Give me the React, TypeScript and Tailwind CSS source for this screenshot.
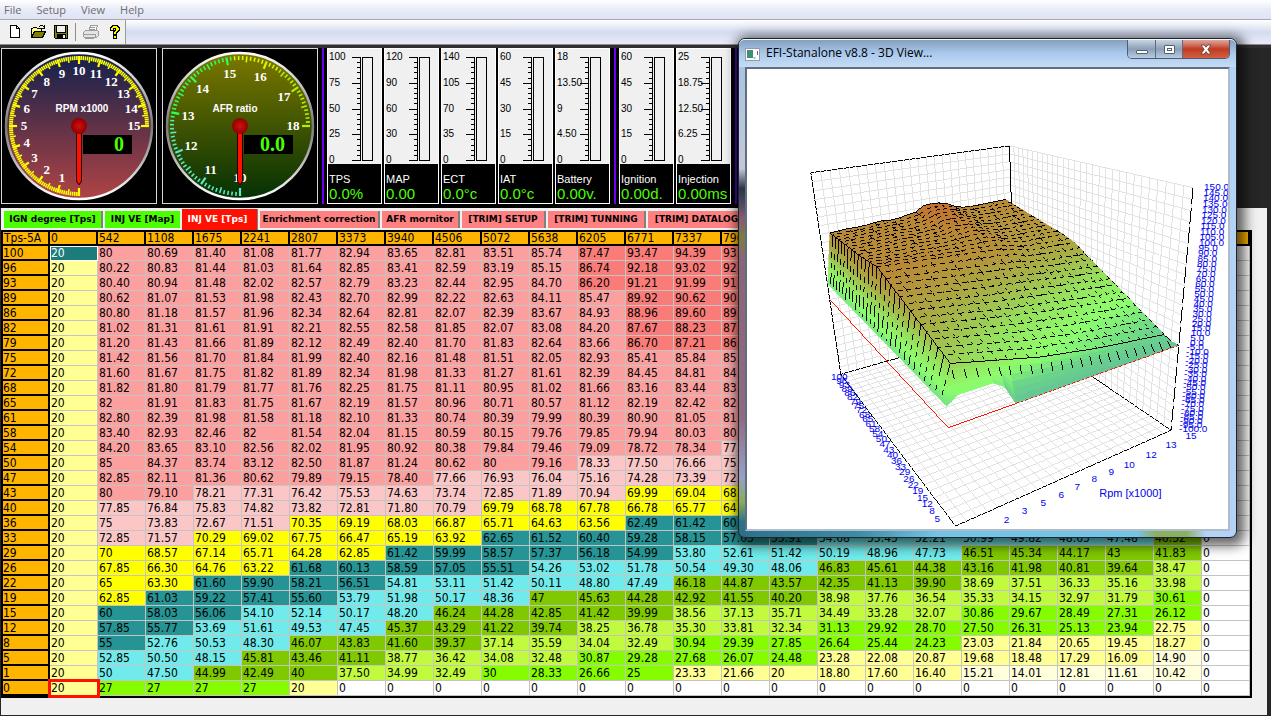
import * as React from "react";

/* ---------- fuel map data ---------- */

const RPM = [
  0, 542, 1108, 1675, 2241, 2807, 3373, 3940, 4506, 5072, 5638, 6205, 6771, 7337, 7904, 8470, 9036, 9603, 10169, 10735,
  11301, 11868, 12434, 13000, 13600,
];

// First column is the throttle position, then one value per RPM column.
const RAW = `
100|20 80 80.69 81.40 81.08 81.77 82.94 83.65 82.81 83.51 85.74 87.47 93.47 94.39 93.80
96|20 80.22 80.83 81.44 81.03 81.64 82.85 83.41 82.59 83.19 85.15 86.74 92.18 93.02 92.40
93|20 80.40 80.94 81.48 82.02 82.57 82.79 83.23 82.44 82.95 84.70 86.20 91.21 91.99 91.30
89|20 80.62 81.07 81.53 81.98 82.43 82.70 82.99 82.22 82.63 84.11 85.47 89.92 90.62 90.10
86|20 80.80 81.18 81.57 81.96 82.34 82.64 82.81 82.07 82.39 83.67 84.93 88.96 89.60 89.10
82|20 81.02 81.31 81.61 81.91 82.21 82.55 82.58 81.85 82.07 83.08 84.20 87.67 88.23 87.60
79|20 81.20 81.43 81.66 81.89 82.12 82.49 82.40 81.70 81.83 82.64 83.66 86.70 87.21 86.50
75|20 81.42 81.56 81.70 81.84 81.99 82.40 82.16 81.48 81.51 82.05 82.93 85.41 85.84 85.20
72|20 81.60 81.67 81.75 81.82 81.89 82.34 81.98 81.33 81.27 81.61 82.39 84.45 84.81 84.20
68|20 81.82 81.80 81.79 81.77 81.76 82.25 81.75 81.11 80.95 81.02 81.66 83.16 83.44 83.00
65|20 82 81.91 81.83 81.75 81.67 82.19 81.57 80.96 80.71 80.57 81.12 82.19 82.42 82.00
61|20 82.80 82.39 81.98 81.58 81.18 82.10 81.33 80.74 80.39 79.99 80.39 80.90 81.05 81.00
58|20 83.40 82.93 82.46 82 81.54 82.04 81.15 80.59 80.15 79.76 79.85 79.94 80.03 80.00
54|20 84.20 83.65 83.10 82.56 82.02 81.95 80.92 80.38 79.84 79.46 79.09 78.72 78.34 77.50
50|20 85 84.37 83.74 83.12 82.50 81.87 81.24 80.62 80 79.16 78.33 77.50 76.66 75.80
47|20 82.85 82.11 81.36 80.62 79.89 79.15 78.40 77.66 76.93 76.04 75.16 74.28 73.39 72.50
43|20 80 79.10 78.21 77.31 76.42 75.53 74.63 73.74 72.85 71.89 70.94 69.99 69.04 68.10
40|20 77.85 76.84 75.83 74.82 73.82 72.81 71.80 70.79 69.79 68.78 67.78 66.78 65.77 64.70
36|20 75 73.83 72.67 71.51 70.35 69.19 68.03 66.87 65.71 64.63 63.56 62.49 61.42 60.30
33|20 72.85 71.57 70.29 69.02 67.75 66.47 65.19 63.92 62.65 61.52 60.40 59.28 58.15 57.03 55.91 54.68 53.45 52.21 50.99 49.82 48.65 47.48 46.32 0
29|20 70 68.57 67.14 65.71 64.28 62.85 61.42 59.99 58.57 57.37 56.18 54.99 53.80 52.61 51.42 50.19 48.96 47.73 46.51 45.34 44.17 43 41.83 0
26|20 67.85 66.30 64.76 63.22 61.68 60.13 58.59 57.05 55.51 54.26 53.02 51.78 50.54 49.30 48.06 46.83 45.61 44.38 43.16 41.98 40.81 39.64 38.47 0
22|20 65 63.30 61.60 59.90 58.21 56.51 54.81 53.11 51.42 50.11 48.80 47.49 46.18 44.87 43.57 42.35 41.13 39.90 38.69 37.51 36.33 35.16 33.98 0
19|20 62.85 61.03 59.22 57.41 55.60 53.79 51.98 50.17 48.36 47 45.63 44.28 42.92 41.55 40.20 38.98 37.76 36.54 35.33 34.15 32.97 31.79 30.61 0
15|20 60 58.03 56.06 54.10 52.14 50.17 48.20 46.24 44.28 42.85 41.42 39.99 38.56 37.13 35.71 34.49 33.28 32.07 30.86 29.67 28.49 27.31 26.12 0
12|20 57.85 55.77 53.69 51.61 49.53 47.45 45.37 43.29 41.22 39.74 38.25 36.78 35.30 33.81 32.34 31.13 29.92 28.70 27.50 26.31 25.13 23.94 22.75 0
8|20 55 52.76 50.53 48.30 46.07 43.83 41.60 39.37 37.14 35.59 34.04 32.49 30.94 29.39 27.85 26.64 25.44 24.23 23.03 21.84 20.65 19.45 18.27 0
5|20 52.85 50.50 48.15 45.81 43.46 41.11 38.77 36.42 34.08 32.48 30.87 29.28 27.68 26.07 24.48 23.28 22.08 20.87 19.68 18.48 17.29 16.09 14.90 0
1|20 50 47.50 44.99 42.49 40 37.50 34.99 32.49 30 28.33 26.66 25 23.33 21.66 20 18.80 17.60 16.40 15.21 14.01 12.81 11.61 10.42 0
0|20 27 27 27 27 20 0 0 0 0 0 0 0 0 0 0 0 0 0 0 0 0 0 0 0`;

// High-load rows are completed by blending between the wide open tail and the 33% tail.
const TOP_TAIL = [93.8, 91, 86.4, 83.4, 82.6, 82.8, 83, 83.3, 83.5, 83.8];
const LOW_TAIL = [57.03, 55.91, 54.68, 53.45, 52.21, 50.99, 49.82, 48.65, 47.48, 46.32];

const MAP = RAW.trim()
  .split("\n")
  .map((line) => {
    const [tps, rest] = line.split("|");
    const values = rest.split(" ");
    if (values.length === 15) {
      const w = (Number(values[14]) - LOW_TAIL[0]) / (TOP_TAIL[0] - LOW_TAIL[0]);
      for (let i = 1; i < 10; i++) values.push((LOW_TAIL[i] + w * (TOP_TAIL[i] - LOW_TAIL[i])).toFixed(2));
      values.push("0");
    }
    return { tps, values };
  });

function cellColor(v: number) {
  if (v >= 86.1) return "bg-[#fa7c78]";
  if (v >= 78.335) return "bg-[#fc9f9f]";
  if (v >= 70.5) return "bg-[#fbc6c6]";
  if (v >= 62.7) return "bg-[#ffff00]";
  if (v >= 54.85) return "bg-[#269494]";
  if (v >= 47.2) return "bg-[#70eaea]";
  if (v >= 39.2) return "bg-[#80c800]";
  if (v >= 31.3) return "bg-[#c2fb3e]";
  if (v >= 23.5) return "bg-[#86fc00]";
  if (v >= 15.6) return "bg-[#ffff94]";
  if (v > 0) return "bg-[#ffffdc]";
  return "bg-white";
}

/* ---------- round gauges ---------- */

type DialProps = {
  id: string;
  title: string;
  titleX: number;
  labelRadius: number;
  min: number;
  max: number;
  value: string;
  from: string;
  to: string;
  tick: (t: number) => string;
};

function polar(r: number, t: number) {
  const a = ((90 + 270 * t) * Math.PI) / 180;
  return [77 + r * Math.cos(a), 77 + r * Math.sin(a)];
}

function Dial({ id, title, titleX, labelRadius, min, max, value, from, to, tick }: DialProps) {
  const n = (max - min) * 10;
  const marks = Array.from({ length: n + 1 }, (_, i) => i);
  const labels = Array.from({ length: max - min + 1 }, (_, i) => min + i);
  return (
    <div className="size-[156px] shrink-0 border border-[#d8d8d8] bg-black">
      <svg viewBox="0 0 154 154" className="block size-full" role="img" aria-label={title}>
        <defs>
          <linearGradient id={`${id}-face`} x1="0" y1="0" x2="0" y2="1">
            <stop offset="0" stopColor={from} />
            <stop offset="1" stopColor={to} />
          </linearGradient>
          <linearGradient id={`${id}-rim`} x1="0" y1="0" x2="0" y2="1">
            <stop offset="0" stopColor="#ffffff" />
            <stop offset="0.5" stopColor="#777777" />
            <stop offset="1" stopColor="#ffffff" />
          </linearGradient>
          <radialGradient id={`${id}-hub`}>
            <stop offset="0" stopColor="#d01010" />
            <stop offset="1" stopColor="#900000" />
          </radialGradient>
        </defs>
        <circle cx="77" cy="77" r="73" fill={`url(#${id}-face)`} stroke={`url(#${id}-rim)`} strokeWidth="2.5" />
        {marks.map((i) => {
          const t = i / n;
          const major = i % 10 === 0;
          const [x1, y1] = polar(major ? 62 : i % 5 === 0 ? 64 : 66, t);
          const [x2, y2] = polar(70, t);
          return <line key={i} x1={x1} y1={y1} x2={x2} y2={y2} stroke={tick(t)} strokeWidth={major ? 2.2 : 1.6} />;
        })}
        {labels.map((v, i) => {
          const [x, y] = polar(i === 0 ? 52 : labelRadius, i / (labels.length - 1));
          return (
            <text
              key={v}
              x={x}
              y={y + 4}
              textAnchor="middle"
              fill="#fff"
              fontSize="13"
              fontWeight="bold"
              fontFamily="'Liberation Serif', serif"
            >
              {v}
            </text>
          );
        })}
        <text
          x={titleX}
          y="63"
          textAnchor="middle"
          fill="#fff"
          fontSize="10"
          fontWeight="bold"
          fontFamily="'Liberation Sans', sans-serif"
        >
          {title}
        </text>
        <rect x="81" y="86" width="49" height="19" fill="#000" />
        <text
          x="122"
          y="102"
          textAnchor="end"
          fill="#4cff00"
          fontSize="20"
          fontWeight="bold"
          fontFamily="'Liberation Serif', serif"
        >
          {value}
        </text>
        <path d="M74.5 77v55l2.5 4 2.5-4V77z" fill="#ff1000" stroke="#200" strokeWidth="1" />
        <circle cx="77" cy="77" r="8" fill={`url(#${id}-hub)`} />
      </svg>
    </div>
  );
}

/* ---------- bar gauges ---------- */

function BarGauge({ name, value, scale }: { name: string; value: string; scale: string[] }) {
  return (
    <div className="flex h-[156px] w-[57px] shrink-0 flex-col border-r-2 border-black">
      <div className="flex h-full flex-col border border-white bg-[#f0f0f0]">
        <svg viewBox="0 0 53 115" className="block h-[115px] w-[53px] overflow-visible" shapeRendering="crispEdges">
          {Array.from({ length: 21 }, (_, i) => (
            <rect key={i} x={i % 5 ? 29 : 24} y={8 + Math.round(i * 5.15)} width={i % 5 ? 4 : 9} height="1" fill="#000" />
          ))}
          <rect x="32" y="8" width="1" height="104" fill="#000" />
          <rect x="34.5" y="8.5" width="10" height="103" fill="none" stroke="#000" />
          {scale.map((s, i) => (
            <text
              key={i}
              x="1"
              y={11 + Math.round(i * 25.75)}
              fontSize="10"
              fill="#000"
              fontFamily="'Liberation Sans', sans-serif"
            >
              {s}
            </text>
          ))}
        </svg>
        <div className="flex-1 bg-black pt-2 pl-px font-['Liberation_Sans',sans-serif] whitespace-nowrap">
          <div className="text-[11px] leading-[14px] text-white">{name}</div>
          <output className="block text-[15px] leading-4 text-[#4cff00]">{value}</output>
        </div>
      </div>
    </div>
  );
}

const ENGINE_BARS = [
  { name: "TPS", value: "0.0%", scale: ["100", "75", "50", "25", "0"] },
  { name: "MAP", value: "0.00", scale: ["120", "90", "60", "30", "0"] },
  { name: "ECT", value: "0.0°c", scale: ["140", "105", "70", "35", "0"] },
  { name: "IAT", value: "0.0°c", scale: ["60", "45", "30", "15", "0"] },
  { name: "Battery", value: "0.00v.", scale: ["18", "13.50", "9", "4.50", "0"] },
];

const OUTPUT_BARS = [
  { name: "Ignition", value: "0.00d.", scale: ["60", "45", "30", "15", "0"] },
  { name: "Injection", value: "0.00ms", scale: ["25", "18.75", "12.50", "6.25", "0"] },
];

/* ---------- 3D surface ---------- */

type Pt = [number, number];

// Perspective camera: x = rpm, y = throttle (0 is 100%), z = value from -100 to 150.
function project(x: number, y: number, z: number): Pt {
  const w = 1 + 0.1577 * x - 0.3056 * y - 0.125 * z;
  return [(840.4 + 334.7 * x - 177.2 * y - 131.3 * z) / w, (375 + 1.3 * x - 9.3 * y - 223.9 * z) / w];
}

// Perspective mapping of the unit square on four corners.
function quadMap([p0, p1, p2, p3]: Pt[]) {
  const dx1 = p1[0] - p2[0];
  const dx2 = p3[0] - p2[0];
  const dx3 = p0[0] - p1[0] + p2[0] - p3[0];
  const dy1 = p1[1] - p2[1];
  const dy2 = p3[1] - p2[1];
  const dy3 = p0[1] - p1[1] + p2[1] - p3[1];
  const det = dx1 * dy2 - dx2 * dy1;
  const g = (dx3 * dy2 - dx2 * dy3) / det;
  const h = (dx1 * dy3 - dx3 * dy1) / det;
  return (u: number, v: number): Pt => {
    const w = g * u + h * v + 1;
    return [
      ((p1[0] - p0[0] + g * p1[0]) * u + (p3[0] - p0[0] + h * p3[0]) * v + p0[0]) / w,
      ((p1[1] - p0[1] + g * p1[1]) * u + (p3[1] - p0[1] + h * p3[1]) * v + p0[1]) / w,
    ];
  };
}

const A: Pt = [810, 173];
const B: Pt = [1009, 146];
const C: Pt = [1193, 188];
const D: Pt = [840, 375];
const E: Pt = [955, 527];
const F: Pt = [1171, 431];
const G: Pt = [1015, 325];

const fmt = (p: Pt) => `${p[0].toFixed(1)} ${p[1].toFixed(1)}`;

function gridPath(corners: Pt[], nu: number, nv: number) {
  const m = quadMap(corners);
  let d = "";
  for (let i = 0; i <= nu; i++) d += `M${fmt(m(i / nu, 0))}L${fmt(m(i / nu, 1))}`;
  for (let j = 0; j <= nv; j++) d += `M${fmt(m(0, j / nv))}L${fmt(m(1, j / nv))}`;
  return d;
}

const RAMP: [number, number, number, number][] = [
  [0, 100, 196, 150],
  [15, 108, 214, 136],
  [30, 140, 255, 108],
  [45, 150, 224, 92],
  [60, 166, 178, 70],
  [72, 178, 152, 60],
  [83, 184, 136, 52],
  [95, 200, 108, 44],
];

function heat(v: number) {
  for (let i = 1; i < RAMP.length; i++) {
    if (v <= RAMP[i][0]) {
      const [v0, ...a] = RAMP[i - 1];
      const [v1, ...b] = RAMP[i];
      const t = Math.max(0, (v - v0) / (v1 - v0));
      return `rgb(${a.map((c, k) => Math.round(c + t * (b[k] - c))).join(",")})`;
    }
  }
  return "rgb(200,108,44)";
}

const NUM = MAP.map((r) => r.values.map(Number));

function at(c: number, r: number) {
  const c0 = Math.min(23, Math.floor(c));
  const r0 = Math.min(28, Math.floor(r));
  const s = c - c0;
  const t = r - r0;
  return (
    (NUM[r0][c0] * (1 - s) + NUM[r0][c0 + 1] * s) * (1 - t) + (NUM[r0 + 1][c0] * (1 - s) + NUM[r0 + 1][c0 + 1] * s) * t
  );
}

const vertex = (c: number, r: number): Pt => project(c / 24, r / 29, (at(c, r) + 100) / 250);

function Surface() {
  const parts: React.ReactNode[] = [];
  for (let r = 0; r < 29; r++) {
    for (let c = 23; c >= 0; c--) {
      const nc = c === 0 ? 10 : c === 23 ? 4 : 1;
      const nr = r === 28 ? 6 : 1;
      for (let j = 0; j < nr; j++) {
        for (let i = nc - 1; i >= 0; i--) {
          const c0 = c + i / nc;
          const c1 = c + (i + 1) / nc;
          const r0 = r + j / nr;
          const r1 = r + (j + 1) / nr;
          const fill = heat(at((c0 + c1) / 2, (r0 + r1) / 2));
          const d = `M${fmt(vertex(c0, r0))}L${fmt(vertex(c1, r0))}L${fmt(vertex(c1, r1))}L${fmt(vertex(c0, r1))}Z`;
          parts.push(<path key={`${r}-${c}-${j}-${i}`} d={d} fill={fill} stroke={fill} strokeWidth="0.6" />);
        }
      }
      if (c > 0) {
        parts.push(
          <path
            key={`l${r}-${c}`}
            d={`M${fmt(vertex(c, r))}L${fmt(vertex(c + 1, r))}`}
            stroke="#000"
            strokeDasharray={r === 28 || r === 0 ? undefined : "5 4"}
            strokeDashoffset={(r * 3 + c) % 7}
          />,
        );
      }
      parts.push(
        <path
          key={`m${r}-${c}`}
          d={`M${fmt(vertex(c + 1, r))}L${fmt(vertex(c + 1, r + 1))}`}
          stroke="#000"
          strokeDasharray={c === 0 && r < 28 ? undefined : r === 28 ? "9 60" : "3 5"}
          strokeDashoffset={r === 28 ? -7 : (r + c * 2) % 5}
        />,
      );
    }
  }
  // ticks down the steep low-rpm face
  for (let r = 1; r < 29; r++) {
    const top = vertex(1, r);
    const bottom = vertex(0.05, r);
    parts.push(
      <path
        key={`t${r}`}
        d={`M${fmt(top)}L${fmt(bottom)}`}
        stroke="#000"
        strokeDasharray={r % 3 ? "12 5 6 5 5 5" : "22 9 5 5"}
      />,
    );
  }
  return (
    <g fill="none" shapeRendering="crispEdges">
      {parts}
    </g>
  );
}

const RPM_LABELS: [string, number, number][] = [
  ["2", 1006, 524],
  ["3", 1024, 515],
  ["5", 1043, 507],
  ["6", 1061, 499],
  ["7", 1077, 491],
  ["8", 1094, 483],
  ["9", 1111, 476],
  ["10", 1129, 469],
  ["12", 1151, 459],
  ["13", 1171, 449],
  ["15", 1191, 440],
];

function Chart3D() {
  const zeroLine = [project(0, 0, 0.4), project(0, 1, 0.4), project(0.25, 1, 0.4)];
  const edge = quadMap([B, C, F, G]);
  return (
    <svg viewBox="746 70 482 459" className="block h-full w-full" role="img" aria-label="3D view of the injection map">
      <g fill="none" stroke="#e2e2e2" shapeRendering="crispEdges">
        <path d={gridPath([A, B, G, D], 24, 25)} />
        <path d={gridPath([B, C, F, G], 29, 25)} />
        <path d={gridPath([D, G, F, E], 24, 29)} />
      </g>
      <g fill="none" stroke="#000" shapeRendering="crispEdges">
        <path d={`M${fmt(B)}L${fmt(A)}L${fmt(D)}L${fmt(G)}L${fmt(F)}L${fmt(E)}L${fmt(D)}`} strokeDasharray="5 1" />
        <path d={`M${fmt(B)}L${fmt(G)}`} />
        <path d={`M${fmt(C)}L${fmt(F)}`} strokeDasharray="16 4" />
      </g>
      <Surface />
      <g fill="none" stroke="#ff1400" shapeRendering="crispEdges">
        <path d={`M${zeroLine.map(fmt).join("L")}`} />
        <path d={`M${fmt(zeroLine[2])}L${fmt(project(1, 1, 0.4))}`} strokeDasharray="3 2" />
      </g>
      <g fill="#0000f0" fontSize="10" fontFamily="'Liberation Sans', sans-serif">
        {Array.from({ length: 51 }, (_, i) => {
          const v = 150 - i * 5;
          const p = edge(1, i / 50);
          return (
            <text key={v} x={p[0] + (v < 0 ? 8 : 11)} y={p[1] + 2}>
              {v.toFixed(1)}
            </text>
          );
        })}
        {MAP.slice(0, 28).map((row, i) => {
          const p = project(0, i / 29, 0);
          return (
            <text key={row.tps} x={p[0] - 2 - i / 5} y={p[1] + 6 + i / 6} textAnchor="middle">
              {row.tps}
            </text>
          );
        })}
        {RPM_LABELS.map(([s, x, y]) => (
          <text key={s} x={x} y={y} textAnchor="middle">
            {s}
          </text>
        ))}
        <text x="1099" y="498" fontSize="11">
          Rpm [x1000]
        </text>
      </g>
    </svg>
  );
}

function ViewWindow() {
  return (
    <section
      aria-label="3D View"
      className="absolute top-[38px] left-[738px] flex h-[500px] w-[499px] flex-col rounded-[7px] border border-[#1d2530] bg-[#b4d2f6] bg-[linear-gradient(to_bottom,#a9c4e2_5%,#c2c8d8_26%,#2c3448_30%,#4a4a60_33%,#8a5a70_36%,#7c7c40_40%,#8c6478_44%,#8f6a80_76%,#98a0c4_88%,#8aac58_93%,#2c7088_97%),linear-gradient(to_right,#2c7088_0%,#3c8ca4_24%,#74c4e8_40%,#74c4e8_80%,#8cb060_84%,#8cb060_90%,#b4d2f6_94%)] bg-[size:7px_100%,100%_7px] bg-[position:left_top,left_bottom] bg-no-repeat px-1.5 pb-1.5 shadow-[3px_3px_12px_5px_rgba(0,0,0,0.6)]"
    >
      <div className="-mx-1.5 flex h-7 shrink-0 items-start rounded-t-[6px] border-t border-white/80 bg-linear-to-b from-[#86a0be] via-[#a9c9ee] to-[#c6dcf5] pr-1.5 pl-1.5">
        <svg viewBox="0 0 15 13" className="mt-2 h-[13px] w-[15px]" aria-hidden="true">
          <rect x="0.5" y="0.5" width="14" height="12" fill="#fff" stroke="#9a9a9a" />
          <rect x="2" y="2" width="6" height="8" fill="#3f8f7c" />
          <path d="M8.5 10h2M12.500 3v4" stroke="#4a6ab0" />
        </svg>
        <h2 className="mt-[5px] ml-1.5 font-['Open_Sans',sans-serif] text-[12px] leading-4 text-black">
          EFI-Stanalone v8.8 - 3D View...
        </h2>
        <div className="ml-auto flex h-[19px] overflow-hidden rounded-b-[5px] border border-t-0 border-[#4c5d72]">
          <button
            aria-label="Minimize"
            className="flex w-7 items-center justify-center border-r border-[#5c6d82] bg-linear-to-b from-[#c8d4e2] via-[#8c9fb6] to-[#b8cce4]"
          >
            <span className="mt-1.5 h-1 w-3 rounded-[1px] border border-[#55606e] bg-white" />
          </button>
          <button
            aria-label="Maximize"
            className="flex w-[27px] items-center justify-center border-r border-[#5c6d82] bg-linear-to-b from-[#c8d4e2] via-[#8c9fb6] to-[#b8cce4]"
          >
            <span className="h-[9px] w-[11px] rounded-[1px] border border-[#55606e] bg-white p-0.5">
              <span className="block h-[3px] border border-[#55606e]" />
            </span>
          </button>
          <button
            aria-label="Close"
            className="flex w-[46px] items-center justify-center bg-linear-to-b from-[#e0a79c] via-[#bf3a22] to-[#d4603f]"
          >
            <svg viewBox="0 0 12 11" className="h-[11px] w-3">
              <path
                d="M1 1h3.200l1.800 2.200L7.800 1H11L7.900 5.400 11 10H7.800L6 7.600 4.200 10H1l3.100-4.600z"
                fill="#fff"
                stroke="#5a3a3a"
                strokeWidth="0.8"
              />
            </svg>
          </button>
        </div>
      </div>
      <div className="min-h-0 flex-1 border-2 border-t-[#5f6f80] border-r-[#aebccc] border-b-[#aebccc] border-l-[#5f6f80] bg-white">
        <Chart3D />
      </div>
    </section>
  );
}

/* ---------- tool bar ---------- */

function ToolButton({ label, disabled, children }: { label: string; disabled?: boolean; children: React.ReactNode }) {
  return (
    <button aria-label={label} disabled={disabled} className="flex h-[22px] w-[23px] items-center justify-center">
      <svg viewBox="0 0 16 16" className="size-4" shapeRendering="crispEdges" fill="none">
        {children}
      </svg>
    </button>
  );
}

function Toolbar() {
  return (
    <div className="flex h-6 bg-linear-to-b from-white via-[#d4dcef] to-[#e9ebfa]">
      <div className="flex h-full items-center border-r border-[#9a9a9a] bg-[#f0f0f0] pl-[3px]">
        <ToolButton label="New">
          <path d="M3.500 1.500h6l3 3v9h-9z" fill="#fff" stroke="#000" />
          <path d="M9.500 1.500v3h3" stroke="#000" />
        </ToolButton>
        <ToolButton label="Open">
          <path d="M1.500 13.500v-9h1l1-1h3l1 1h4v3" fill="#ffff80" stroke="#000" />
          <path d="M1.500 13.500l3-6h11l-3 6z" fill="#808000" stroke="#000" />
          <path d="M9 2.500h1M10 1.500h3M13 2.500h1M14 1v4M12 4.500h2" stroke="#000" />
        </ToolButton>
        <ToolButton label="Save">
          <path d="M1.500 1.500h13v13h-12l-1-1z" fill="#808000" stroke="#000" />
          <rect x="4" y="2" width="8" height="6" fill="#f0f0f0" />
          <path d="M3.500 2v6.500h9V2" stroke="#000" />
          <rect x="4" y="10" width="9" height="4" fill="#000" />
          <rect x="10" y="11" width="2" height="3" fill="#f0f0f0" />
        </ToolButton>
        <div className="ml-[3px] h-[18px] w-px bg-[#8c8c8c]" />
        <div className="ml-[3px] flex">
          <ToolButton label="Print" disabled>
            <path d="M5.500 7.500l2-6h7l-2 6" fill="#f8f8f8" stroke="#9c9c9c" />
            <path d="M7 3.500h5M6.500 5.500h5" stroke="#9c9c9c" />
            <path d="M0.500 8.500l2-2h12l1 1v4l-2 2h-12l-1-1z" fill="#e4e4e4" stroke="#9c9c9c" />
            <path d="M1 10.500h11M2 14.500h9M12.500 10v4" stroke="#9c9c9c" />
          </ToolButton>
          <ToolButton label="Help">
            <path
              d="M4 3h1V2h1V1h5v1h1v1h1v3h-1v1h-1v1h-1v2H7V7h1V6h1V4H7v2H4zM7 11h3v3H7z"
              fill="#ffff00"
              stroke="#000"
            />
          </ToolButton>
        </div>
      </div>
    </div>
  );
}

/* ---------- tabs ---------- */

const TABS = [
  { label: "IGN degree [Tps]", look: "mb-0.5 box-content h-[17px] w-[97px] border-r-2 bg-[#4cff00] text-black" },
  { label: "INJ VE [Map]", look: "mb-0.5 h-[17px] w-[75px] bg-[#4cff00] text-black" },
  { label: "INJ VE [Tps]", look: "h-[21px] w-[76px] border-r bg-[#ff1000] pr-1 text-white" },
  { label: "Enrichment correction", look: "mb-0.5 box-content h-[17px] w-[118px] border-r-2 bg-[#ff8080] text-black" },
  { label: "AFR mornitor", look: "mb-0.5 box-content h-[17px] w-[76px] border-r-2 bg-[#ff8080] text-black" },
  { label: "[TRIM] SETUP", look: "mb-0.5 box-content h-[17px] w-[82px] border-r-2 bg-[#ff8080] text-black" },
  { label: "[TRIM] TUNNING", look: "mb-0.5 box-content h-[17px] w-[96px] border-r-2 bg-[#ff8080] text-black" },
  { label: "[TRIM] DATALOG", look: "mb-0.5 box-content h-[17px] w-[97px] border-r-2 bg-[#ff8080] text-black" },
];

function TabBar() {
  return (
    <div role="tablist" className="flex h-[22px] items-end gap-0.5 pl-[3px]">
      {TABS.map((tab) => (
        <button
          key={tab.label}
          role="tab"
          aria-selected={tab.label === "INJ VE [Tps]"}
          className={`shrink-0 border-[#808080] text-center font-['DejaVu_Sans',sans-serif] text-[9px] font-bold whitespace-nowrap ${tab.look}`}
        >
          {tab.label}
        </button>
      ))}
    </div>
  );
}

/* ---------- map table ---------- */

function MapTable() {
  return (
    <table className="w-[1251px] table-fixed border-separate border-spacing-0 border-2 border-black font-['DejaVu_Sans_Condensed','DejaVu_Sans',sans-serif] text-[12px] leading-[12px] text-black">
      <colgroup>
        <col className="w-[47px]" />
        {RPM.map((v) => (
          <col key={v} className="w-12" />
        ))}
      </colgroup>
      <thead>
        <tr className="h-[14px]">
          <th className="border-r-2 border-b-2 border-black bg-[#ffb400] p-0 pl-px text-left font-normal whitespace-nowrap">
            Tps-5A
          </th>
          {RPM.map((v) => (
            <th
              key={v}
              scope="col"
              className="border-r-2 border-b-2 border-black bg-[#ffb400] p-0 pl-px text-left font-normal"
            >
              {v}
            </th>
          ))}
        </tr>
      </thead>
      <tbody>
        {MAP.map((row, r) => (
          <tr key={row.tps} className="h-[15px]">
            <th scope="row" className="border-r-2 border-b-2 border-black bg-[#ffb400] p-0 text-left font-normal">
              {row.tps}
            </th>
            {row.values.map((v, c) => {
              const selected = r === 0 && c === 0;
              const cursor = r === 29 && c === 0;
              return (
                <td
                  key={c}
                  className={`border-r border-b border-[#c4c4c4] p-0 pl-px ${
                    selected ? "bg-[#1c7c7c] text-white outline outline-white -outline-offset-1" : cellColor(Number(v))
                  } ${cursor ? "outline-3 -outline-offset-1 outline-[#ff1000]" : ""}`}
                >
                  {v}
                </td>
              );
            })}
          </tr>
        ))}
      </tbody>
    </table>
  );
}

export default function App() {
  return (
    <div className="relative flex min-h-screen flex-col overflow-hidden bg-[#262626]">
      <nav className="flex h-5 gap-[15px] border-b border-[#a8a8b0] bg-linear-to-b from-white via-[#e8ebf7] to-[#dfe3f5] pl-1 font-['Open_Sans',sans-serif] text-[11px] leading-5 text-[#6d6d6d]">
        {["File", "Setup", "View", "Help"].map((m) => (
          <button key={m} className="block h-5">
            {m}
          </button>
        ))}
      </nav>
      <Toolbar />
      <div className="h-1 shrink-0 border-t border-[#8c8c8c] bg-[#303030]" />

      <div className="flex h-40 w-[738px] shrink-0 bg-black pl-px">
        <Dial
          id="rpm"
          title="RPM x1000"
          titleX={80}
          labelRadius={55}
          min={0}
          max={15}
          value="0"
          from="#10204c"
          to="#b04444"
          tick={() => "#ffff00"}
        />
        <div className="w-[5px] shrink-0" />
        <Dial
          id="afr"
          title="AFR ratio"
          titleX={72}
          labelRadius={53}
          min={10}
          max={18}
          value="0.0"
          from="#7c7800"
          to="#043004"
          tick={(t) => (t < 0.36 ? "#5ce8c4" : t < 0.65 ? "#30ff60" : t < 0.8 ? "#d8f800" : "#b0f000")}
        />
        <div className="mr-[3px] ml-1 h-[156px] w-0.5 shrink-0 bg-[#6a00f4]" />
        {ENGINE_BARS.map((b) => (
          <BarGauge key={b.name} {...b} />
        ))}
        <div className="mr-[3px] ml-0.5 h-[156px] w-0.5 shrink-0 bg-[#6a00f4]" />
        {OUTPUT_BARS.map((b) => (
          <BarGauge key={b.name} {...b} />
        ))}
        <div className="ml-0.5 h-[156px] w-0.5 shrink-0 bg-[#4a00b0]" />
      </div>

      <main className="mr-1 mb-px ml-px flex-1 bg-[#f0f0f0]">
        <TabBar />
        <MapTable />
      </main>

      <ViewWindow />
    </div>
  );
}
